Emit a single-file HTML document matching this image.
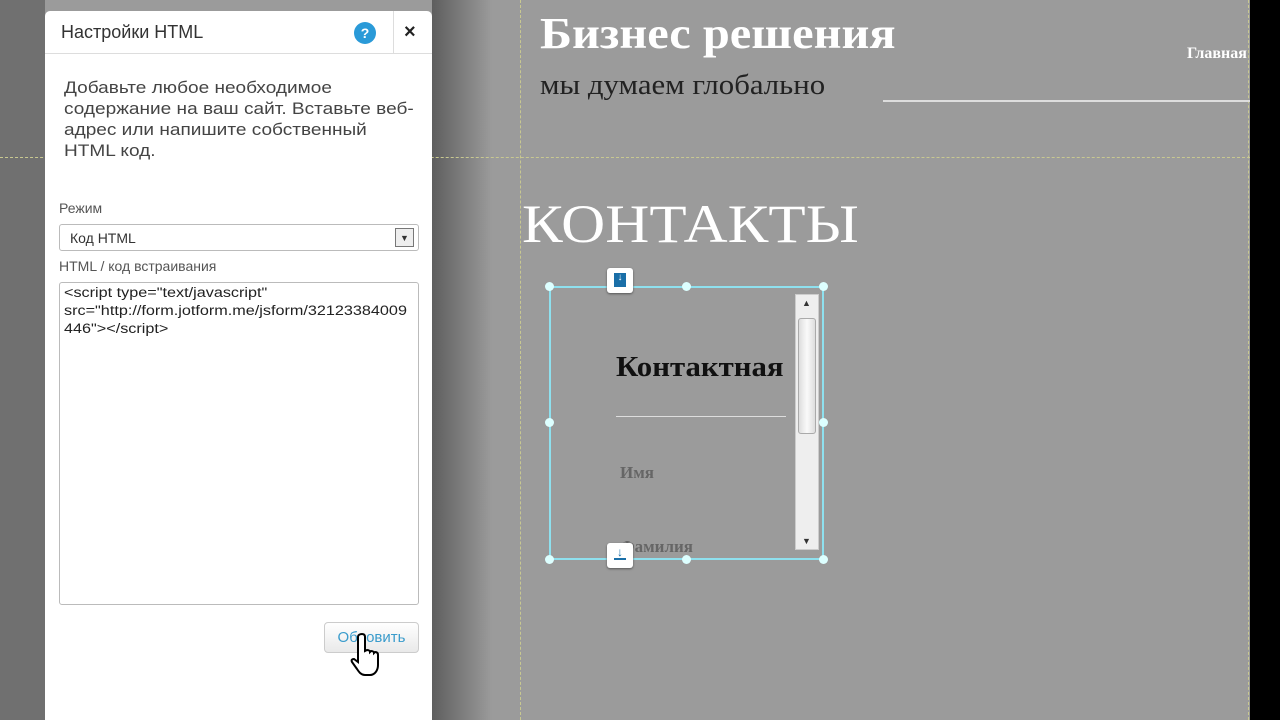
<!DOCTYPE html>
<html><head><meta charset="utf-8"><style>
*{margin:0;padding:0;box-sizing:border-box}
body{width:1280px;height:720px;overflow:hidden;background:#9b9b9b;position:relative;font-family:"Liberation Sans",sans-serif}
.a{position:absolute}
.serif{font-family:"Liberation Serif","Noto Serif CJK SC",serif;transform-origin:0 0;white-space:nowrap}
</style></head><body>
<div class="a" style="left:0;top:0;width:45px;height:720px;background:#707070"></div>
<div class="a" style="left:432px;top:0;width:60px;height:720px;background:linear-gradient(90deg,#5e5e5e,#9b9b9b)"></div>
<div class="a" style="left:1250px;top:0;width:30px;height:720px;background:#000"></div>
<div class="a" style="left:0;top:157px;width:1250px;border-top:1px dashed #c8c890"></div>
<div class="a" style="left:520px;top:0;height:720px;border-left:1px dashed #c8c890"></div>
<div class="a" style="left:1248px;top:0;height:720px;border-left:1px dashed #c8c890"></div>
<div class="a serif" style="left:540px;top:8px;font-size:44px;font-weight:bold;color:#fff;transform:scaleX(1.1)">Бизнес решения</div>
<div class="a serif" style="left:540px;top:70px;font-size:28px;color:#222;transform:scaleX(1.1)">мы думаем глобально</div>
<div class="a serif" style="left:1187px;top:45px;font-size:16px;font-weight:bold;color:#fff">Главная</div>
<div class="a" style="left:883px;top:100px;width:367px;height:2px;background:#ddd"></div>
<div class="a serif" style="left:522px;top:193px;font-size:54px;color:#fff;transform:scaleX(1.13)">КОНТАКТЫ</div>
<div class="a" style="left:549px;top:286px;width:275px;height:274px;border:2px solid #8ee0ee"></div>
<div class="a" style="left:795px;top:294px;width:24px;height:256px;background:#eee;border:1px solid #ccc"></div>
<div class="a" style="left:798px;top:318px;width:18px;height:116px;background:linear-gradient(90deg,#ddd,#fafafa,#ddd);border:1px solid #aaa;border-radius:3px"></div>
<div class="a" style="left:802px;top:298px;font-size:9px;color:#333">▲</div>
<div class="a" style="left:802px;top:536px;font-size:9px;color:#333">▼</div>
<div class="a serif" style="left:616px;top:352px;font-size:28px;font-weight:bold;color:#111;transform:scaleX(1.1)">Контактная</div>
<div class="a" style="left:616px;top:416px;width:170px;height:1px;background:#ddd"></div>
<div class="a serif" style="left:620px;top:463px;font-size:17px;font-weight:bold;color:#666">Имя</div>
<div class="a serif" style="left:620px;top:537px;font-size:17px;font-weight:bold;color:#666">Фамилия</div>
<div class="a" style="left:545px;top:282px;width:9px;height:9px;border-radius:50%;background:#dff"></div>
<div class="a" style="left:682px;top:282px;width:9px;height:9px;border-radius:50%;background:#dff"></div>
<div class="a" style="left:819px;top:282px;width:9px;height:9px;border-radius:50%;background:#dff"></div>
<div class="a" style="left:545px;top:418px;width:9px;height:9px;border-radius:50%;background:#dff"></div>
<div class="a" style="left:819px;top:418px;width:9px;height:9px;border-radius:50%;background:#dff"></div>
<div class="a" style="left:545px;top:555px;width:9px;height:9px;border-radius:50%;background:#dff"></div>
<div class="a" style="left:682px;top:555px;width:9px;height:9px;border-radius:50%;background:#dff"></div>
<div class="a" style="left:819px;top:555px;width:9px;height:9px;border-radius:50%;background:#dff"></div>
<div class="a" style="left:607px;top:268px;width:26px;height:25px;background:#fff;border-radius:3px;box-shadow:0 1px 2px #555"><div style="margin:5px auto;width:12px;height:14px;background:#1a6fa8;color:#fff;font-size:10px;text-align:center;line-height:10px">↓</div></div>
<div class="a" style="left:607px;top:543px;width:26px;height:25px;background:#fff;border-radius:3px;box-shadow:0 1px 2px #555"><div style="margin:3px auto;width:12px;color:#1a6fa8;font-size:12px;text-align:center;line-height:12px;border-bottom:2px solid #1a6fa8">↓</div></div>
<div class="a" style="left:45px;top:11px;width:387px;height:709px;background:#fff;border-radius:5px 5px 0 0">
 <div style="height:43px;border-bottom:1px solid #ddd;position:relative">
  <div class="a" style="left:16px;top:11px;font-size:18px;color:#333">Настройки HTML</div>
  <div class="a" style="left:309px;top:11px;width:22px;height:22px;border-radius:50%;background:#2a9ad8;color:#fff;font-weight:bold;font-size:14px;text-align:center;line-height:22px">?</div>
  <div class="a" style="left:348px;top:0;width:1px;height:43px;background:#ddd"></div>
  <div class="a" style="left:359px;top:10px;font-size:20px;font-weight:bold;color:#222">×</div>
 </div>
 <div class="a" style="left:19px;top:66px;font-size:17px;line-height:21px;color:#444;white-space:nowrap;transform:scaleX(1.12);transform-origin:0 0">Добавьте любое необходимое<br>содержание на ваш сайт. Вставьте веб-<br>адрес или напишите собственный<br>HTML код.</div>
 <div class="a" style="left:14px;top:189px;font-size:14px;color:#555">Режим</div>
 <div class="a" style="left:14px;top:213px;width:360px;height:27px;border:1px solid #bbb;border-radius:3px;font-size:14px;color:#333;padding:5px 10px">Код HTML
  <div class="a" style="right:4px;top:3px;width:19px;height:19px;border:1px solid #777;background:#eee;font-size:9px;text-align:center;line-height:18px">▼</div></div>
 <div class="a" style="left:14px;top:247px;font-size:14px;color:#555">HTML / код встраивания</div>
 <div class="a" style="left:14px;top:271px;width:360px;height:323px;border:1px solid #bbb;border-radius:3px"></div>
 <div class="a" style="left:19px;top:273px;font-size:13.5px;line-height:18px;color:#222;white-space:nowrap;transform:scaleX(1.2);transform-origin:0 0">&lt;script type="text/javascript"<br>src="http://form.jotform.me/jsform/32123384009<br>446"&gt;&lt;/script&gt;</div>
 <div class="a" style="left:279px;top:611px;width:95px;height:31px;border:1px solid #ccc;border-radius:4px;background:linear-gradient(#fff,#e9e9e9);font-size:15px;color:#3a9ccc;text-align:center;line-height:29px">Обновить</div>
</div>
<svg class="a" style="left:350px;top:632px" width="40" height="48" viewBox="0 0 40 48"><path d="M12 2c2 0 3 1 3 3v14l2-1c2 0 3 1 3 2l1-1c2 0 3 1 3 2l1-1c2 0 3 1 3 3v10c0 5-3 10-8 10h-5c-4 0-6-3-8-6l-5-7c-1-2 0-3 2-3l4 3V5c0-2 2-3 4-3z" fill="#fff" stroke="#000" stroke-width="2"/></svg>
</body></html>
